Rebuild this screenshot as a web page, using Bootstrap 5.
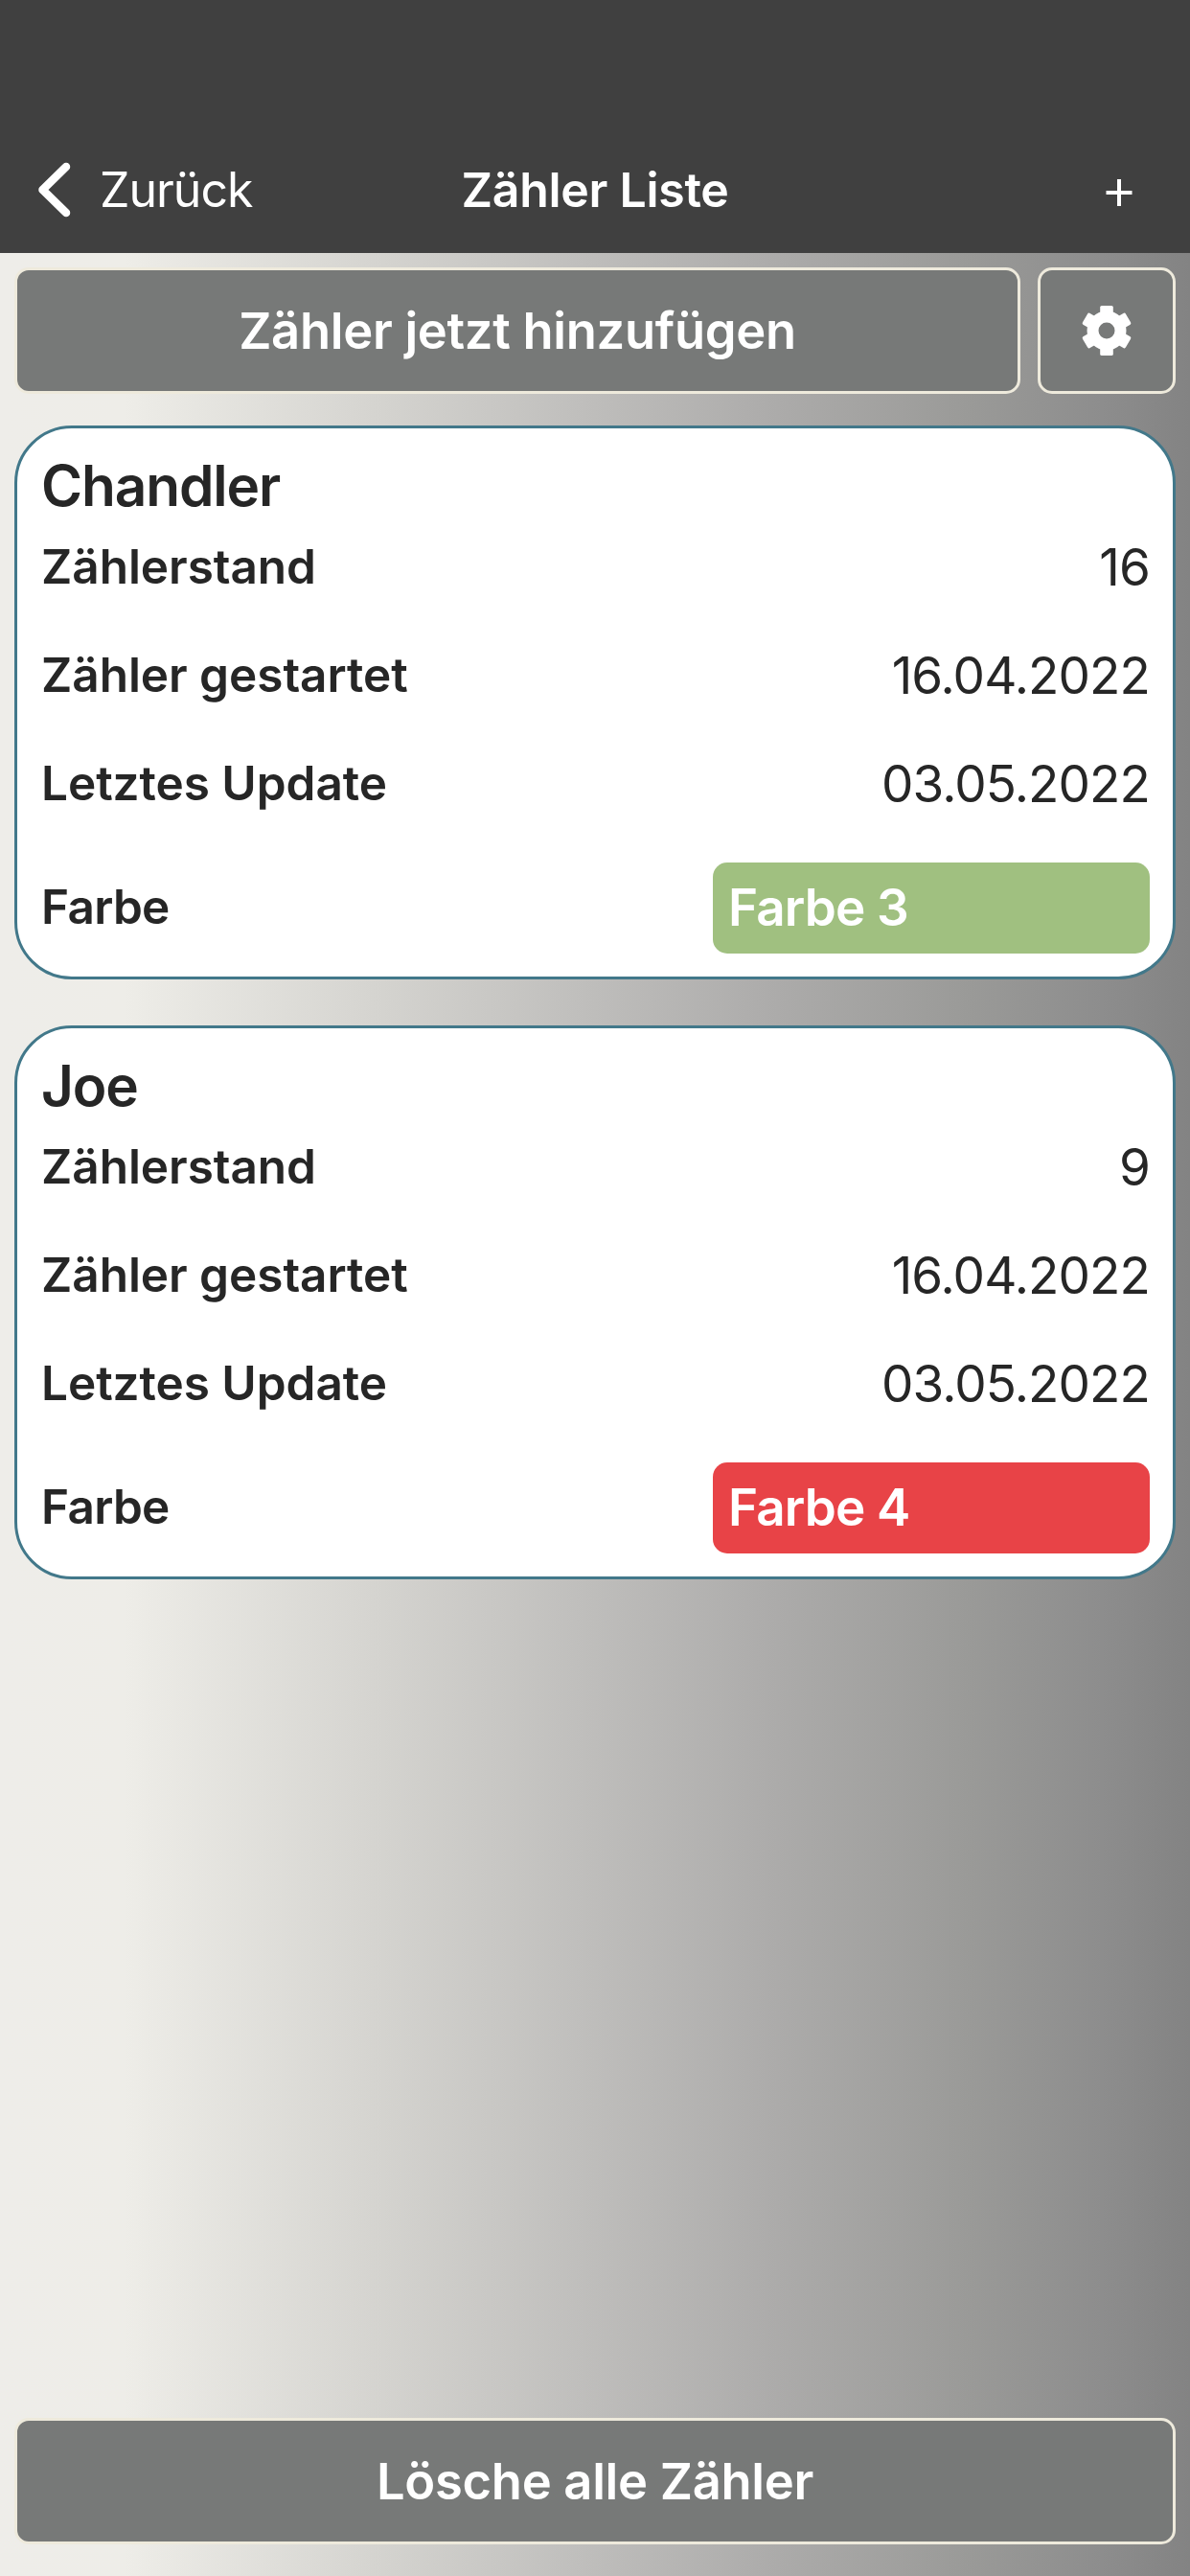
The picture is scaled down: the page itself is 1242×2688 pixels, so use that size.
<!DOCTYPE html>
<html lang="de">
<head>
<meta charset="utf-8">
<meta name="viewport" content="width=device-width, initial-scale=1">
<title>Zähler Liste</title>
<link rel="stylesheet" href="https://cdn.jsdelivr.net/npm/bootstrap@5.3.0/dist/css/bootstrap.min.css">
<style>
  body {
    font-family: Inter, "Liberation Sans", sans-serif;
    color: #262626;
    background: linear-gradient(90deg, #eeede9 0, #eeede8 130px, #d4d3cf 400px, #bfbebc 610px, #adacab 800px, #9a9a98 1010px, #8d8d8d 1150px, #838383 1242px);
  }
  .screen { height: 2688px; }
  .topbar { height: 264px; padding-top: 132px; background: #404040; color: #fff; font-size: 50px; line-height: 132px; }
  .topbar .side { width: 400px; }
  .topbar svg { display: block; }
  .back { padding-left: 36px; letter-spacing: -1px; gap: 26px; }
  .plus { padding-right: 59px; }
  .page-title { font-size: inherit; font-weight: 600; letter-spacing: -.28px; line-height: inherit; }
  .content { padding: 15px 15px 33px; }
  .actions { gap: 18px; }
  .btn-app {
    height: 132px; padding: 0; border: 3px solid #eeeadc; border-radius: 15px;
    background: #777978; color: #fff; font-size: 52.5px; font-weight: 600; letter-spacing: -.3px; line-height: 126px;
  }
  .btn-gear { width: 144px; }
  .counter { height: 578px; margin-top: 33px; padding: 32px 24px 0 25px; border: 3px solid #42788a; border-radius: 60px; color: inherit; }
  .counter + .counter { margin-top: 48px; }
  .counter-name { font-size: 58.5px; font-weight: 600; line-height: 56px; letter-spacing: -1.1px; }
  .entry { height: 113px; font-size: 49.5px; }
  .entry dt { font-weight: 600; letter-spacing: -.04px; }
  .entry-value { font-size: 53px; letter-spacing: -.88px; padding-top: 2px; }
  .entry-color { height: 95px; margin-top: 26px; }
  .entry-color dt { letter-spacing: -.7px; padding-bottom: 2px; }
  .swatch { width: 456px; height: 95px; line-height: 92px; padding: 1px 0 0 16px; border-radius: 15px; color: #fff; font-weight: 600; }
  .swatch-3 { background: #a0c080; }
  .swatch-4 { background: #e84347; }
</style>
</head>
<body>
<div class="screen d-flex flex-column">
  <header class="topbar d-flex align-items-center flex-shrink-0">
    <div class="side back d-flex align-items-center">
      <svg width="42" height="64" viewBox="0 0 42 64" fill="none" stroke="#fff" stroke-width="8.500" stroke-linecap="round" stroke-linejoin="round"><path d="M33 8 8.500 32 33 56"/></svg>
      <span>Zurück</span>
    </div>
    <h1 class="page-title flex-grow-1 text-center m-0">Zähler Liste</h1>
    <div class="side plus d-flex justify-content-end">
      <svg width="30" height="34" viewBox="0 0 30 34" stroke="#fff" stroke-width="4"><path d="M1.500 20h27M15 6v28"/></svg>
    </div>
  </header>

  <main class="content d-flex flex-column flex-grow-1">
    <div class="actions d-flex">
      <button type="button" class="btn btn-app flex-grow-1">Zähler jetzt hinzufügen</button>
      <button type="button" class="btn btn-app btn-gear d-flex align-items-center justify-content-center" aria-label="Einstellungen">
        <svg width="54" height="54" viewBox="-27 -27 54 54">
          <g fill="#fff">
            <circle r="20.500"/>
            <path id="tooth" d="M-6.800-17V-24.500Q-6.800-26-5-26H5Q6.800-26 6.800-24.500V-17Z"/>
            <use href="#tooth" transform="rotate(60)"/>
            <use href="#tooth" transform="rotate(120)"/>
            <use href="#tooth" transform="rotate(180)"/>
            <use href="#tooth" transform="rotate(240)"/>
            <use href="#tooth" transform="rotate(300)"/>
          </g>
          <circle r="8.500" fill="#777978"/>
        </svg>
      </button>
    </div>

    <section class="card counter">
      <h2 class="counter-name m-0">Chandler</h2>
      <dl class="m-0">
        <div class="entry d-flex justify-content-between align-items-center"><dt>Zählerstand</dt><dd class="entry-value m-0">16</dd></div>
        <div class="entry d-flex justify-content-between align-items-center"><dt>Zähler gestartet</dt><dd class="entry-value m-0">16.04.2022</dd></div>
        <div class="entry d-flex justify-content-between align-items-center"><dt>Letztes Update</dt><dd class="entry-value m-0">03.05.2022</dd></div>
        <div class="entry entry-color d-flex justify-content-between align-items-center"><dt>Farbe</dt><dd class="entry-value swatch swatch-3 m-0">Farbe 3</dd></div>
      </dl>
    </section>

    <section class="card counter">
      <h2 class="counter-name m-0">Joe</h2>
      <dl class="m-0">
        <div class="entry d-flex justify-content-between align-items-center"><dt>Zählerstand</dt><dd class="entry-value m-0">9</dd></div>
        <div class="entry d-flex justify-content-between align-items-center"><dt>Zähler gestartet</dt><dd class="entry-value m-0">16.04.2022</dd></div>
        <div class="entry d-flex justify-content-between align-items-center"><dt>Letztes Update</dt><dd class="entry-value m-0">03.05.2022</dd></div>
        <div class="entry entry-color d-flex justify-content-between align-items-center"><dt>Farbe</dt><dd class="entry-value swatch swatch-4 m-0">Farbe 4</dd></div>
      </dl>
    </section>

    <button type="button" class="btn btn-app w-100 mt-auto">Lösche alle Zähler</button>
  </main>
</div>
<script src="https://cdn.jsdelivr.net/npm/bootstrap@5.3.0/dist/js/bootstrap.bundle.min.js"></script>
</body>
</html>
